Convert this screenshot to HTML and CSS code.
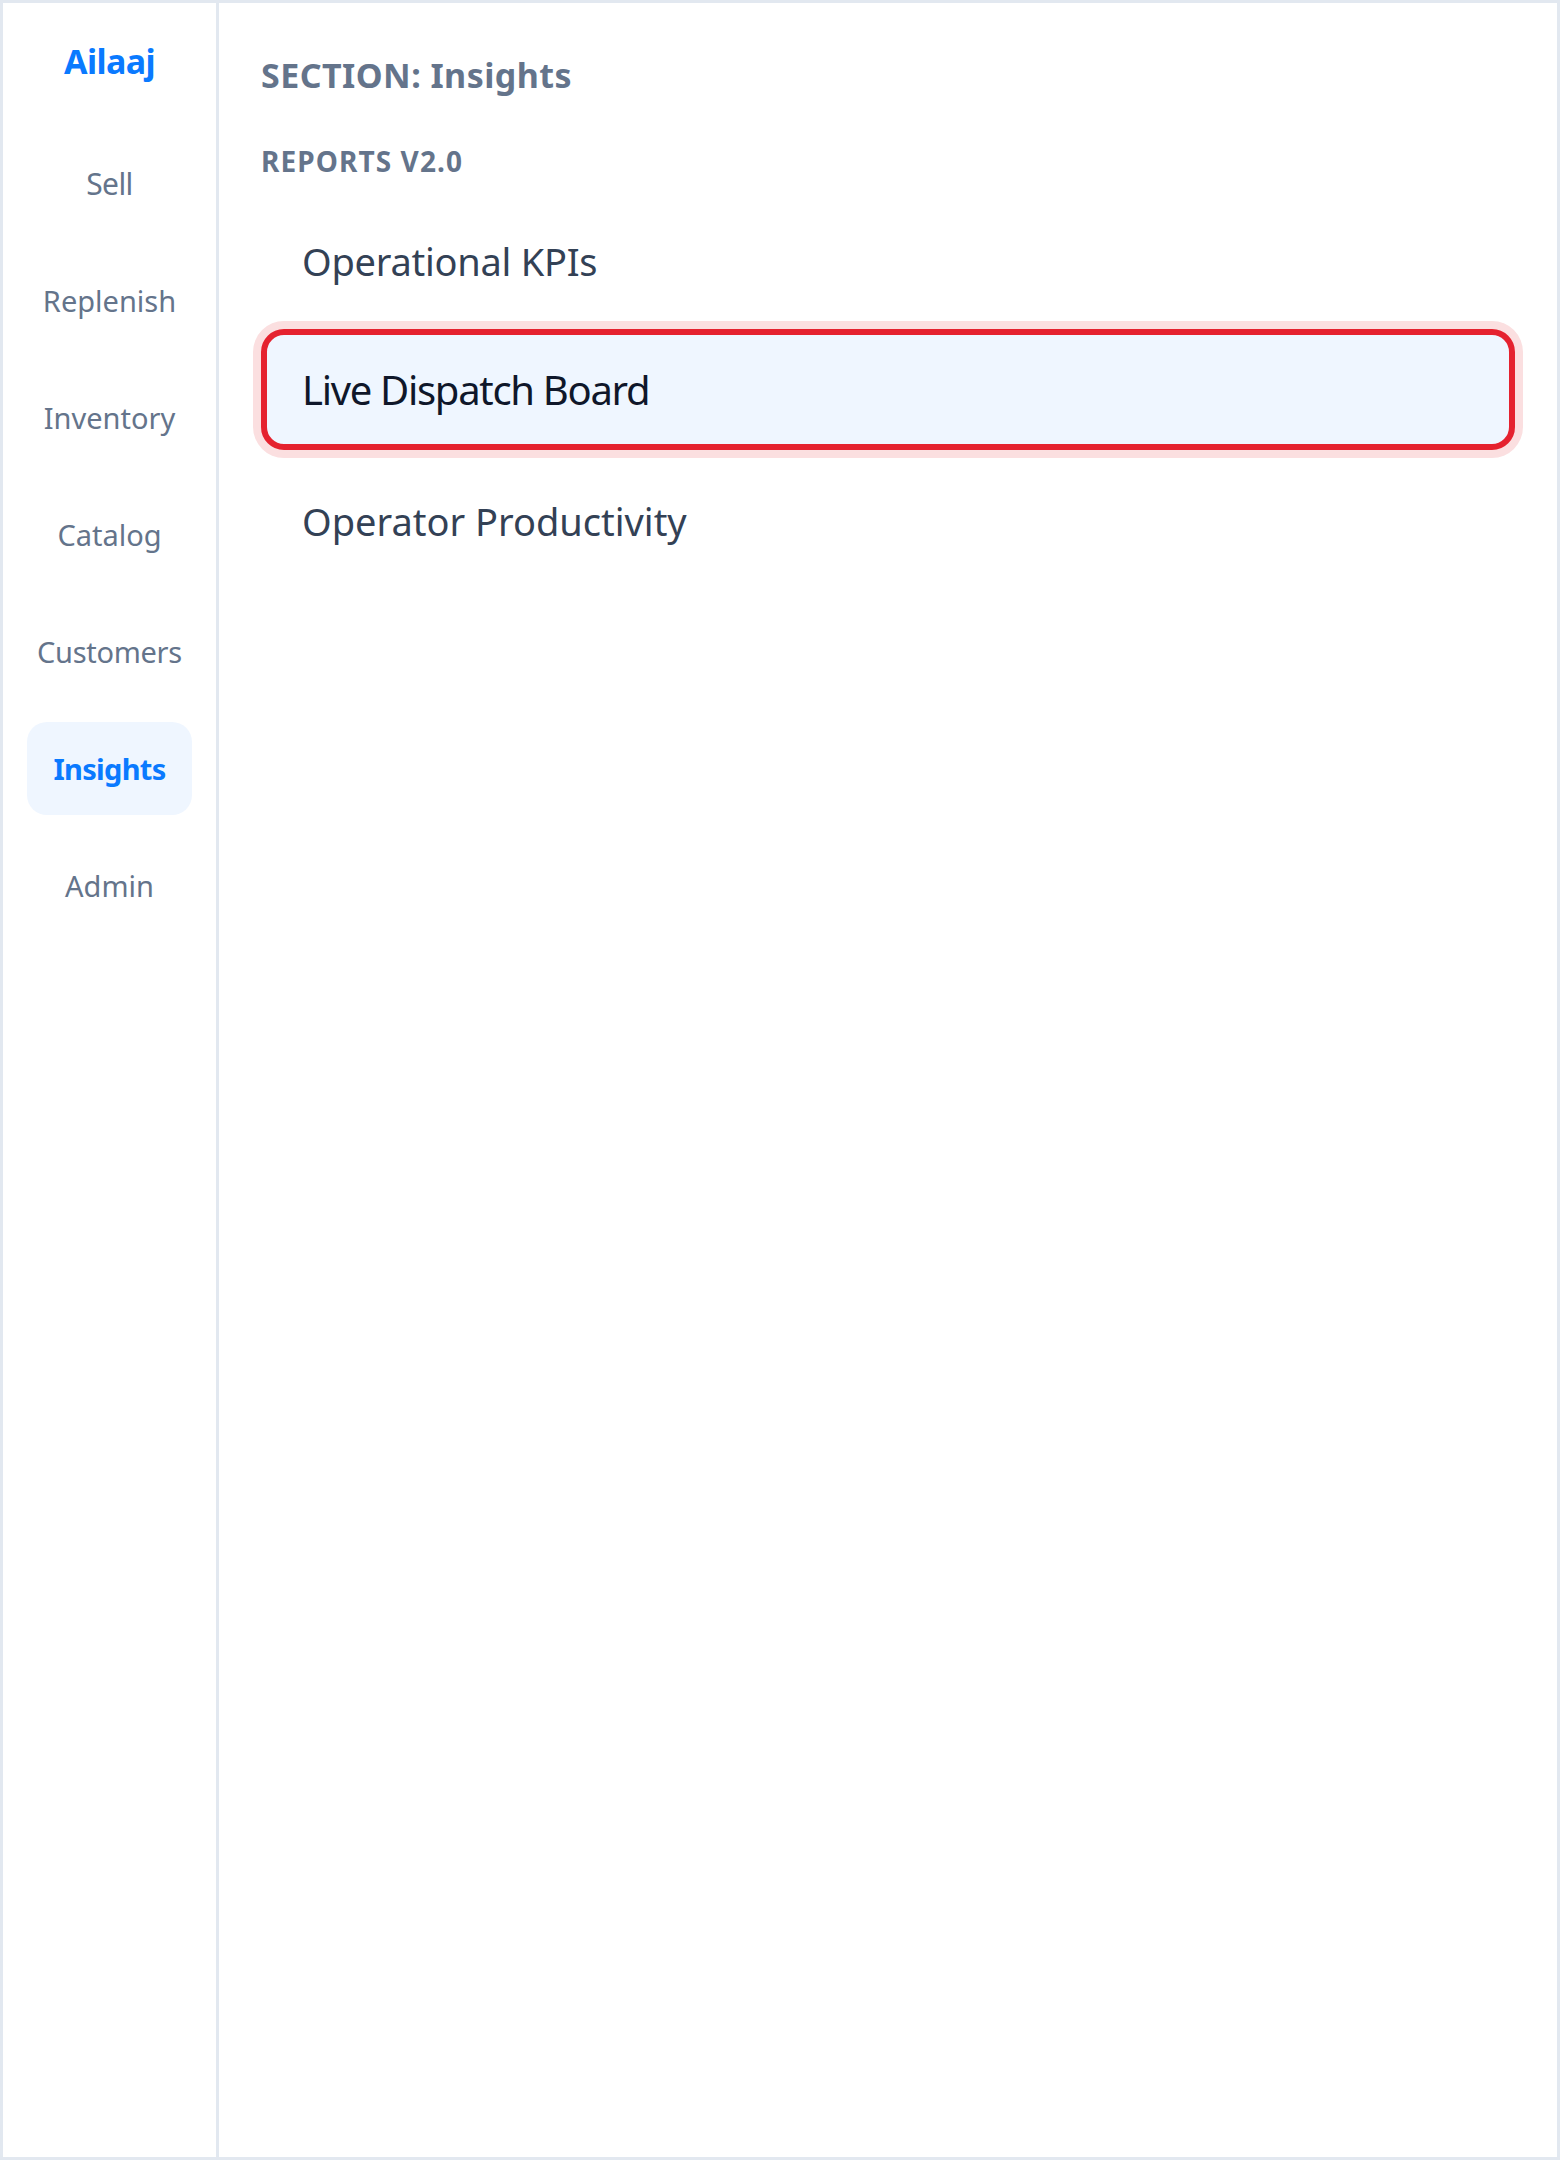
FILE: index.html
```html
<!DOCTYPE html>
<html lang="en">
<head>
<meta charset="utf-8">
<title>Ailaaj – Insights</title>
<link rel="stylesheet" href="styles.css">
</head>
<body>
<div class="frame">
  <aside class="sidebar">
    <div class="logo">Ailaaj</div>
    <nav class="nav">
      <div class="nav-item nav-sell">Sell</div>
      <div class="nav-item">Replenish</div>
      <div class="nav-item">Inventory</div>
      <div class="nav-item">Catalog</div>
      <div class="nav-item nav-customers">Customers</div>
      <div class="nav-item active">Insights</div>
      <div class="nav-item">Admin</div>
    </nav>
  </aside>
  <main class="main">
    <div class="section-title">SECTION: Insights</div>
    <div class="group-title">REPORTS V2.0</div>
    <div class="report-list">
      <div class="report-item kpis">Operational KPIs</div>
      <div class="report-item selected">Live Dispatch Board</div>
      <div class="report-item productivity">Operator Productivity</div>
    </div>
  </main>
</div>
</body>
</html>
```
FILE: styles.css
```css
* { box-sizing: border-box; }

html, body {
  margin: 0;
  padding: 0;
  background: #ffffff;
}

body {
  font-family: "Noto Sans", "Open Sans", sans-serif;
}

.frame {
  width: 1560px;
  height: 2160px;
  border: 3px solid #e2e8f0;
  display: flex;
  background: #ffffff;
}

.sidebar {
  width: 216px;
  flex: 0 0 216px;
  border-right: 3px solid #e2e8f0;
  padding: 33px 24px 0 24px;
  display: flex;
  flex-direction: column;
}

.logo {
  height: 50px;
  line-height: 50px;
  font-size: 34px;
  font-weight: 700;
  color: #0a7aff;
  text-align: center;
  letter-spacing: -0.6px;
}

.nav {
  margin-top: 51px;
  display: flex;
  flex-direction: column;
  gap: 24px;
}

.nav-item {
  height: 93px;
  line-height: 93px;
  border-radius: 20px;
  text-align: center;
  font-size: 29px;
  color: #64748b;
  white-space: nowrap;
}

.nav-item.nav-sell {
  font-size: 30px;
  letter-spacing: -0.6px;
}

.nav-item.nav-customers {
  letter-spacing: -0.3px;
}

.nav-item.active {
  background: #eff6ff;
  color: #0a7aff;
  font-weight: 700;
  letter-spacing: -0.7px;
}

.main {
  flex: 1;
  padding: 50px 42px 0 42px;
  display: flex;
  flex-direction: column;
}

.section-title {
  height: 44px;
  line-height: 44px;
  font-size: 34px;
  font-weight: 700;
  color: #64748b;
  letter-spacing: 0.45px;
}

.group-title {
  margin-top: 46px;
  height: 36px;
  line-height: 36px;
  font-size: 28px;
  font-weight: 700;
  color: #64748b;
  letter-spacing: 1.1px;
}

.report-list {
  margin-top: 22px;
  display: flex;
  flex-direction: column;
  gap: 9px;
}

.report-item {
  height: 121px;
  line-height: 109px;
  border: 6px solid transparent;
  border-radius: 23px;
  padding-left: 35px;
  font-size: 38px;
  color: #334155;
  white-space: nowrap;
}

.report-item.kpis {
  letter-spacing: -0.25px;
}

.report-item.selected {
  margin-top: -2px;
  margin-bottom: 2px;
  border-color: #e5222f;
  background: #eff6ff;
  box-shadow: 0 0 0 8px #fbdfe0;
  color: #0f172a;
  font-size: 40px;
  letter-spacing: -1.3px;
}
```
